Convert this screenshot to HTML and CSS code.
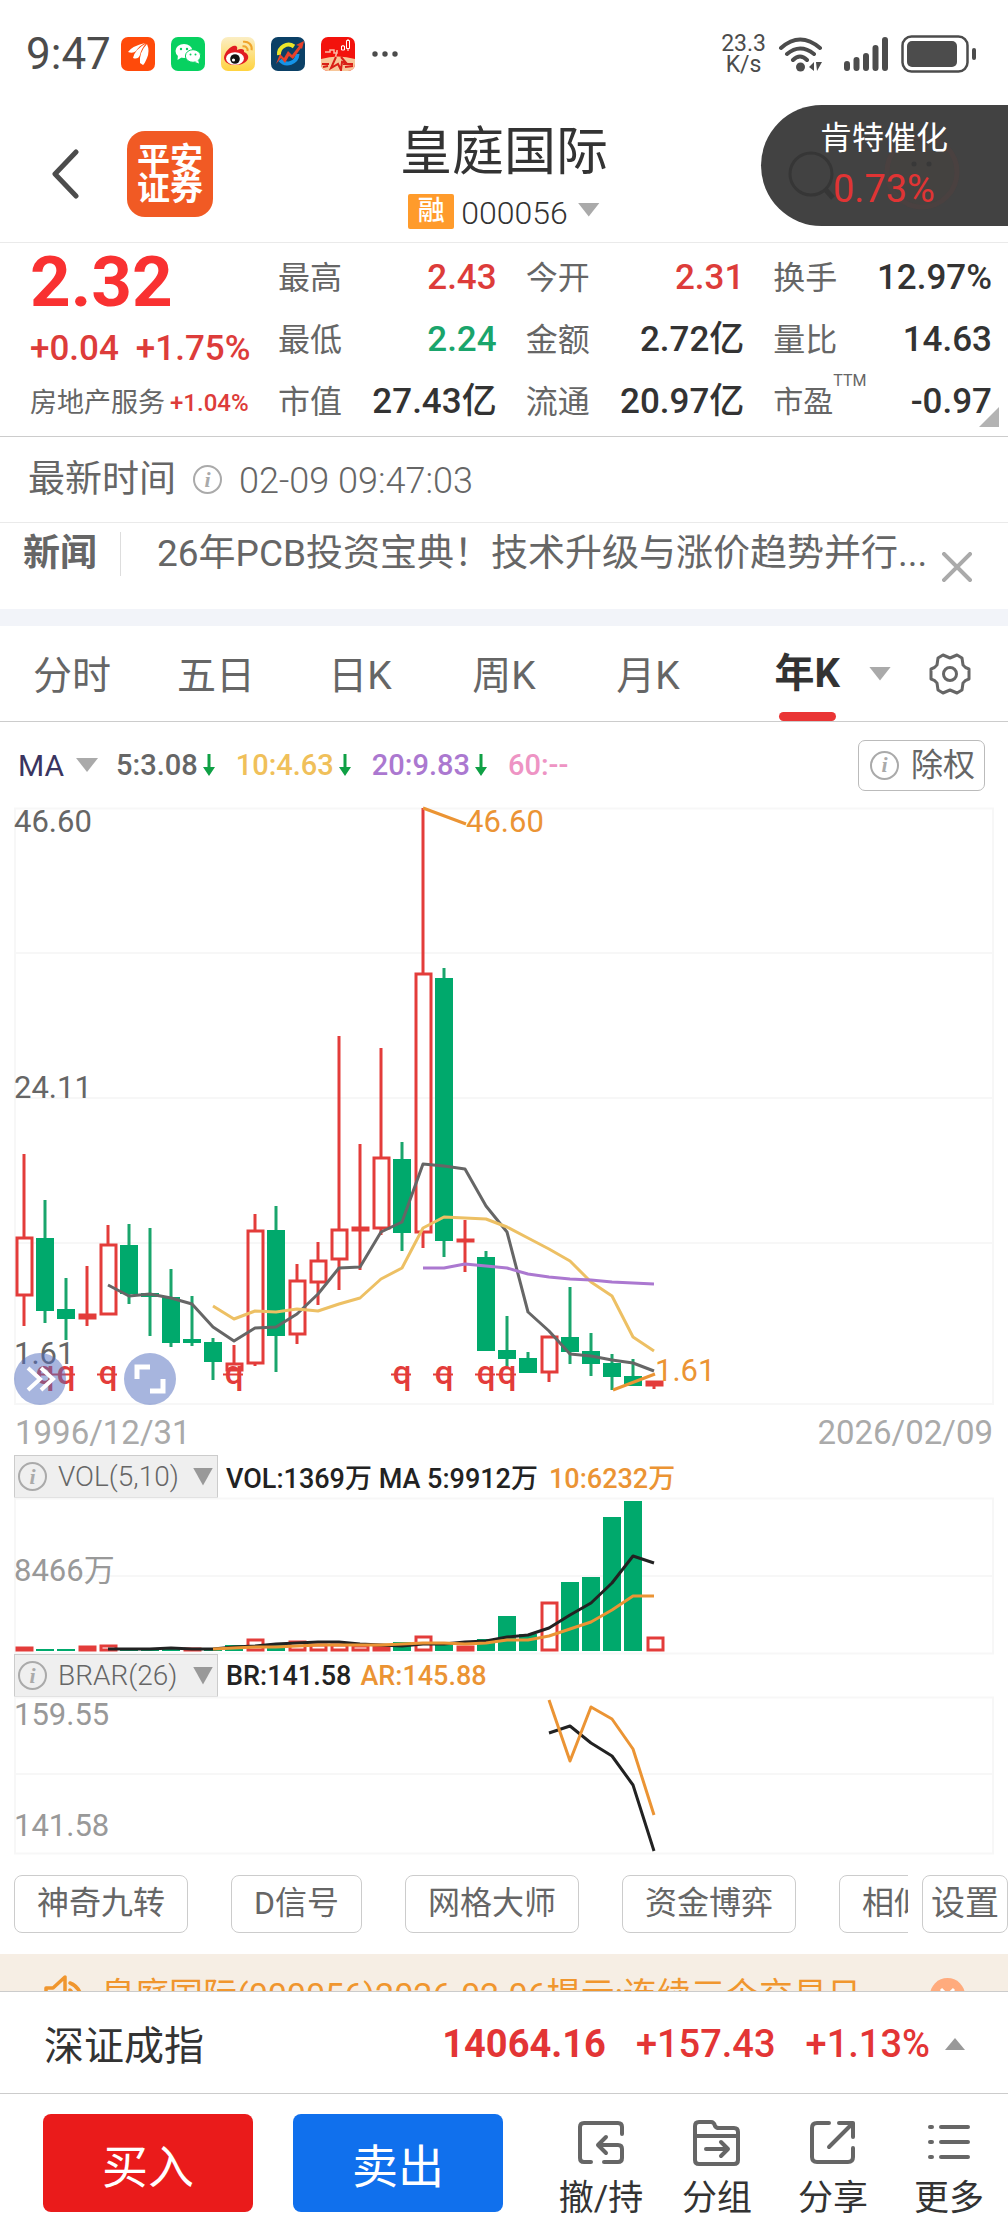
FILE: index.html
```html
<!DOCTYPE html>
<html lang="zh-CN">
<head>
<meta charset="utf-8">
<meta name="viewport" content="width=device-width, initial-scale=1">
<title>皇庭国际 000056</title>
<link rel="stylesheet" href="styles.css">
</head>
<body>
<div class="app">
  <div class="content">
    <div class="status">
      <span class="clock">9:47</span>
      <div class="apps">
        <svg viewBox="0 0 34 34"><rect width="34" height="34" rx="7" fill="#ff4a0a"/><path fill="#fff" d="M7 15Q11 9 24 6Q18 9 15 14Q12 17 7 15ZM12 21Q14 12 25 6.500Q20 12 19 18Q17 23 12 21ZM19 26Q18 15 26 7Q29 14 26 21Q23 28 22 28Z"/></svg>
        <svg viewBox="0 0 34 34"><rect width="34" height="34" rx="7" fill="#07d160"/><ellipse cx="13" cy="14" rx="8.500" ry="7" fill="#fff"/><path fill="#fff" d="M7 18l-.5 5 4-2.500z"/><circle cx="10" cy="12" r="1.200" fill="#07d160"/><circle cx="16" cy="12" r="1.200" fill="#07d160"/><ellipse cx="22" cy="19" rx="7.600" ry="6.300" fill="#fff" stroke="#07d160"/><path fill="#fff" d="M27 23l1 3.500-4-1.500z"/><circle cx="19.500" cy="17.500" r="1" fill="#07d160"/><circle cx="24.500" cy="17.500" r="1" fill="#07d160"/></svg>
        <svg viewBox="0 0 34 34"><defs><linearGradient id="wb" x2="0" y2="1"><stop stop-color="#fbeec4"/><stop offset="1" stop-color="#ffd33f"/></linearGradient></defs><rect width="34" height="34" rx="7" fill="url(#wb)"/><path fill="#e11b22" d="M3 21C3 15 11 7 15 9C17 10 16 12 16 13C20 11 24 12 23 15C28 17 28 21 26 23.500C21 30 4 30 3 21Z"/><ellipse cx="14" cy="21.500" rx="9" ry="6.300" fill="#fff"/><circle cx="14" cy="22" r="4.800" fill="#111"/><circle cx="12.500" cy="23" r="1.600" fill="#fff"/><path d="M21.500 9.500c3-.8 5.500 1.500 5 4.500M22 4.800c5.500-1 9.500 3.500 8.600 8.500" fill="none" stroke="#f0a52c" stroke-width="2"/></svg>
        <svg viewBox="0 0 34 34"><rect width="34" height="34" rx="7" fill="#0b4066"/><path d="M23 9.500A9.500 9.500 0 0 0 8 18" fill="none" stroke="#ece52a" stroke-width="4"/><path d="M9 23A10 10 0 0 0 26.500 17" fill="none" stroke="#1594e8" stroke-width="4"/><path fill="#e8412a" d="M5 27L9 17 13 21 17 14 21 18 28 9 25 8 33 4 31 12 30 11 22 22 18 19 14 26 10 21Z"/></svg>
        <svg viewBox="0 0 34 34"><defs><clipPath id="r"><rect width="34" height="34" rx="7"/></clipPath></defs><g clip-path="url(#r)"><rect width="34" height="34" fill="#f3120c"/><path fill="#f7c79a" d="M0 22Q17 17 34 22V34H0Z"/><path d="M4 15h5v-2h4v3h3v-3M16 14l-2 8M22 8v5M27 2v12" stroke="#fbb9a4" stroke-width="1.500" fill="none"/><path d="M25.500 3.500h3v8h-3zM20.500 9h3v4h-3z" fill="#f3120c" stroke="#fff" stroke-width="1"/><path d="M1 27h7M2 30l5-1M22 27h10M24 30l8-1M15 20l-5 11 7-4 3 6 1-8 5 2-6-7" stroke="#d91f16" stroke-width="2" fill="none"/></g></svg>
      </div>
      <svg class="dots" viewBox="0 0 26 6"><g fill="#4c4c4c"><circle cx="3" cy="3" r="2.700"/><circle cx="13" cy="3" r="2.700"/><circle cx="23" cy="3" r="2.700"/></g></svg>
      <div class="speed">23.3<br>K/s</div>
      <svg class="wifi" viewBox="0 0 46 36"><g fill="none" stroke="#4c4c4c" stroke-width="4" stroke-linecap="round"><path d="M3 12Q22 -5 42 12M9 18Q22 7 36 18M15 24Q22 17 29 24"/></g><circle cx="22.500" cy="31" r="4.500" fill="#4c4c4c"/><path fill="#4c4c4c" d="M31 31l5-5v9zM38 26h6l-5 9z"/></svg>
      <svg class="signal" viewBox="0 0 44 36"><path d="M3 28V32M12.500 24V32M22 20V32M31.500 12V32M41 4V32" stroke="#4c4c4c" stroke-width="6" stroke-linecap="round"/></svg>
      <svg class="battery" viewBox="0 0 76 38"><rect x="1.500" y="1.500" width="65" height="35" rx="9" fill="none" stroke="#4c4c4c" stroke-width="2.500"/><rect x="6" y="6" width="50" height="26" rx="5" fill="#4c4c4c"/><rect x="71" y="13" width="4" height="12" rx="2" fill="#4c4c4c"/></svg>
    </div>

    <header class="stock-header">
      <div class="nav">
        <button class="back" aria-label="返回"><svg viewBox="0 0 28 50"><path d="M25 3L4 25 25 47" fill="none" stroke="#4c4c4c" stroke-width="5" stroke-linecap="round" stroke-linejoin="round"/></svg></button>
        <div class="logo">平安<br>证券</div>
      </div>
      <div class="names">
        <h1>皇庭国际</h1>
        <div class="code"><span class="badge">融</span><span>000056</span><span class="tri"></span></div>
      </div>
      <div class="float">
        <svg class="ghost" viewBox="0 0 247 121"><g fill="none" stroke="#363636" stroke-width="3"><circle cx="50" cy="69" r="21"/><path d="M64 84l8 9" stroke-width="5"/></g><circle cx="161" cy="67" r="35" fill="#444240" stroke="#4a4140" stroke-width="5"/><circle cx="153" cy="59" r="2.500" fill="#383838"/><circle cx="168" cy="59" r="2.500" fill="#383838"/></svg>
        <span class="float-name">肯特催化</span>
        <span class="float-value">0.73%</span>
      </div>
    </header>

    <section class="quote">
      <div class="price">
        <div class="last">2.32</div>
        <div class="change"><span>+0.04</span><span>+1.75%</span></div>
        <div class="sector"><span>房地产服务</span><span class="sector-pct">+1.04%</span></div>
      </div>
      <dl class="stats">
        <div><dt>最高</dt><dd class="up">2.43</dd></div>
        <div><dt>最低</dt><dd class="down">2.24</dd></div>
        <div><dt>市值</dt><dd>27.43亿</dd></div>
      </dl>
      <dl class="stats">
        <div><dt>今开</dt><dd class="up">2.31</dd></div>
        <div><dt>金额</dt><dd>2.72亿</dd></div>
        <div><dt>流通</dt><dd>20.97亿</dd></div>
      </dl>
      <dl class="stats">
        <div><dt>换手</dt><dd>12.97%</dd></div>
        <div><dt>量比</dt><dd>14.63</dd></div>
        <div><dt class="with-sup">市盈<sup>TTM</sup></dt><dd>-0.97</dd></div>
      </dl>
      <span class="corner"></span>
    </section>

    <div class="time-row"><span>最新时间</span><span class="info">i</span><time>02-09 09:47:03</time></div>

    <div class="news">
      <strong>新闻</strong>
      <a href="#">26年PCB投资宝典！技术升级与涨价趋势并行...</a>
      <button class="close" aria-label="关闭"><svg viewBox="0 0 30 30"><path d="M2 2L28 28M28 2L2 28" stroke="#aaa" stroke-width="4" stroke-linecap="square"/></svg></button>
    </div>

    <nav class="tabs">
      <button>分时</button><button>五日</button><button>日K</button><button>周K</button><button>月K</button>
      <button class="active"><span>年K</span></button>
      <div class="tab-tools">
        <span class="tri"></span>
        <button class="gear" aria-label="图表设置"><svg viewBox="0 0 42 42"><g fill="none" stroke="#666" stroke-width="3" stroke-linejoin="round"><path d="M14 2L21 5 28 2 33 5 34 12Q36 15 40 16V26Q36 27 34 30L33 37 28 40 21 37 14 40 9 37 8 30Q6 27 2 26V16Q6 15 8 12L9 5Z"/><circle cx="21" cy="21" r="6.500"/></g></svg></button>
      </div>
    </nav>

    <div class="ma-row">
      <button class="ma-menu">MA<span class="tri"></span></button>
      <span class="ma5">5:3.08<svg class="arrow" viewBox="0 0 14 24"><path d="M5.500 1h3v13H13L7 23 1 14h4.500z"/></svg></span>
      <span class="ma10">10:4.63<svg class="arrow" viewBox="0 0 14 24"><path d="M5.500 1h3v13H13L7 23 1 14h4.500z"/></svg></span>
      <span class="ma20">20:9.83<svg class="arrow" viewBox="0 0 14 24"><path d="M5.500 1h3v13H13L7 23 1 14h4.500z"/></svg></span>
      <span class="ma60">60:--</span>
      <button class="rights"><span class="info">i</span>除权</button>
    </div>

    <div class="kline">
      <svg class="chart" viewBox="0 808 1008 597" role="img" aria-label="年K线图">
        <path class="grid" d="M15 808.500H993V1404H15ZM15 953H993M15 1098H993M15 1243H993"/>
        <g class="axis"><text x="14" y="832">46.60</text><text x="14" y="1098">24.11</text><text x="14" y="1364">1.61</text></g>
        <path class="green-wick" d="M45 1200V1323M66 1278V1340M129 1224V1304M150 1228V1336M171 1269V1347M192 1296V1346M213 1338V1380M276 1206V1372M402 1142V1251M444 968V1257M486 1251V1300M507 1316V1368M528 1352V1373M570 1287V1364M591 1333V1376M612 1354V1390M633 1359V1386"/>
        <path class="green-body" d="M36 1238h18v73h-18zM57 1309h18v10h-18zM120 1245h18v49h-18zM141 1293h18v4h-18zM162 1297h18v46h-18zM183 1339h18v4h-18zM204 1342h18v20h-18zM267 1230h18v106h-18zM393 1159h18v74h-18zM435 978h18v263h-18zM477 1257h18v94h-18zM498 1350h18v9h-18zM519 1358h18v15h-18zM561 1337h18v15h-18zM582 1351h18v13h-18zM603 1363h18v14h-18zM624 1376h18v10h-18z"/>
        <path class="red" d="M24 1154V1238M24 1295V1326M87 1266V1314M87 1319V1326M108 1225V1245M234 1345V1364M255 1214V1231M255 1363V1366M297 1264V1281M297 1334V1344M318 1242V1261M318 1282V1305M339 1036V1230M339 1259V1290M360 1144V1227M360 1231V1270M381 1048V1158M381 1228V1235M423 808V974M423 1232V1248M465 1220V1272M654 1386V1389M549 1372V1382"/>
        <path class="red" d="M17 1238h15v57h-15zM80 1315h15v3h-15zM101 1245h15v69h-15zM227 1364h15v6h-15zM248 1231h15v132h-15zM290 1281h15v53h-15zM311 1261h15v21h-15zM332 1230h15v29h-15zM353 1228h15v2h-15zM374 1158h15v70h-15zM416 974h15v258h-15zM458 1240h15v1h-15zM542 1337h15v35h-15zM647 1382h15v3h-15z"/>
        <path class="line ma5-line" d="M108 1285L129 1296 150 1294 171 1298 192 1304 213 1327 234 1341 255 1328 276 1327 297 1314 318 1294 339 1268 360 1267 381 1232 402 1222 423 1164 444 1166 465 1169 486 1206 507 1232 528 1312 549 1331 570 1354 591 1356 612 1360 633 1363 654 1371"/>
        <path class="line ma10-line" d="M213 1306L234 1319 255 1311 276 1312 297 1309 318 1311 339 1304 360 1298 381 1279 402 1268 423 1228 444 1217 465 1218 486 1219 507 1227 528 1238 549 1249 570 1261 591 1282 612 1296 633 1337 654 1351"/>
        <path class="line ma20-line" d="M423 1268L444 1268 465 1264 486 1266 507 1268 528 1274 549 1277 570 1279 591 1280 612 1282 633 1283 654 1284"/>
        <path class="line mark-line" d="M423 808L466 824M613 1390L655 1374"/>
        <g class="mark"><text x="466" y="832">46.60</text><text x="655" y="1381">1.61</text></g>
        <g class="q"><text x="45" y="1384">q</text><text x="66" y="1384">q</text><text x="108" y="1384">q</text><text x="234" y="1384">q</text><text x="402" y="1384">q</text><text x="444" y="1384">q</text><text x="486" y="1384">q</text><text x="507" y="1384">q</text></g>
        <path class="red strike" d="M35 1374.500h20M55 1374.500h20M97 1374.500h20M223 1374.500h20M391 1374.500h20M433 1374.500h20M475 1374.500h20M496 1374.500h20"/>
      </svg>
      <div class="chart-buttons">
        <button aria-label="前进"><svg viewBox="0 0 52 52"><path d="M14 15L26 26 14 37M27 15L39 26 27 37" fill="none" stroke="#fff" stroke-width="4"/></svg></button>
        <button aria-label="全屏"><svg viewBox="0 0 52 52"><path d="M13 26V14H26M39 26V38H26" fill="none" stroke="#fff" stroke-width="5"/></svg></button>
      </div>
    </div>
    <div class="dates"><time>1996/12/31</time><time>2026/02/09</time></div>

    <div class="indicator">
      <button><span class="info">i</span>VOL(5,10)<span class="tri dark"></span></button>
      <span>VOL:1369万 MA 5:9912万</span><span class="orange">10:6232万</span>
    </div>
    <svg class="chart" viewBox="0 1498 1008 156" role="img" aria-label="成交量">
      <path class="grid" d="M15 1498.500H993V1653.500H15ZM15 1576H993"/>
      <g class="axis light"><text x="14" y="1581">8466万</text></g>
      <path class="green-body" d="M36 1649h18v2h-18zM57 1649h18v2h-18zM120 1649h18v2h-18zM141 1648h18v3h-18zM162 1648h18v3h-18zM204 1649h18v2h-18zM225 1645h18v6h-18zM267 1645h18v6h-18zM393 1642h18v9h-18zM435 1644h18v7h-18zM477 1639h18v12h-18zM498 1616h18v35h-18zM519 1634h18v17h-18zM561 1582h18v69h-18zM582 1577h18v74h-18zM603 1517h18v134h-18zM624 1501h18v150h-18z"/>
      <path class="red" d="M17 1648h15v2h-15zM80 1647h15v3h-15zM101 1646h15v4h-15zM185 1649h15v1h-15zM248 1640h15v10h-15zM290 1642h15v8h-15zM311 1645h15v5h-15zM332 1645h15v5h-15zM353 1646h15v4h-15zM374 1647h15v3h-15zM416 1637h15v13h-15zM458 1647h15v3h-15zM542 1603h15v47h-15zM648 1638h15v12h-15z"/>
      <path class="line black-line" d="M108 1649L150 1649 171 1648 192 1649 213 1649 234 1647 255 1646 276 1644 297 1643 318 1642 339 1642 360 1644 381 1645 402 1646 423 1644 444 1644 465 1642 486 1641 507 1637 528 1635 549 1628 570 1615 591 1603 612 1583 633 1556 654 1563"/>
      <path class="line mark-line" d="M213 1649L234 1648 255 1647 276 1647 297 1646 318 1645 381 1645 402 1644 423 1643 444 1643 465 1644 486 1643 507 1640 528 1640 549 1636 570 1629 591 1622 612 1610 633 1596 654 1596"/>
    </svg>

    <div class="indicator">
      <button><span class="info">i</span>BRAR(26)<span class="tri dark"></span></button>
      <span>BR:141.58</span><span class="orange near">AR:145.88</span>
    </div>
    <svg class="chart" viewBox="0 1697 1008 157" role="img" aria-label="BRAR">
      <path class="grid" d="M15 1697.500H993V1853.500H15ZM15 1774H993"/>
      <g class="axis light"><text x="14" y="1725">159.55</text><text x="14" y="1836">141.58</text></g>
      <path class="line black-line" d="M549 1733L570 1726 591 1743 612 1756 633 1785 654 1851"/>
      <path class="line mark-line" d="M549 1700L570 1761 591 1707 612 1719 633 1749 654 1815"/>
    </svg>

    <div class="chips">
      <div class="chip-list"><button>神奇九转</button><button>D信号</button><button>网格大师</button><button>资金博弈</button><button>相似K线</button></div>
      <button class="chip-settings">设置</button>
    </div>

    <div class="notice">
      <svg viewBox="0 0 42 42"><g fill="none" stroke="#f0962e" stroke-width="3.500" stroke-linejoin="round" stroke-linecap="round"><path d="M3 14H10L22 3V39L10 30H3ZM27 9Q35 12 38 21Q35 30 27 34M27 16Q32 21 27 27"/></g></svg>
      <span>皇庭国际(000056)2026-02-06提示:连续三个交易日</span>
      <button aria-label="关闭提示"><svg viewBox="0 0 35 35"><circle cx="17.500" cy="17.500" r="17.500" fill="#ffab7d"/><path d="M11 11L24 24M24 11L11 24" stroke="#fff" stroke-width="3"/></svg></button>
    </div>
  </div>

  <footer class="footer">
    <div class="index-bar">
      <span class="index-name">深证成指</span>
      <strong>14064.16</strong><span>+157.43</span><span>+1.13%</span><span class="tri-up"></span>
    </div>
    <div class="actions">
      <button class="trade buy">买入</button>
      <button class="trade sell">卖出</button>
      <div class="tools">
        <button><svg viewBox="0 0 48 48"><path d="M45 14V7Q45 3 41 3H7Q3 3 3 7V38Q3 42 7 42H14M27 42H41Q45 42 45 38V29Q45 25 41 25H22M29 17L21 25 29 33"/></svg>撤/持</button>
        <button><svg viewBox="0 0 48 48"><path d="M2 6Q2 2 6 2H18Q21 2 22 6Q23 8 26 8H41Q45 8 45 12V40Q45 44 41 44H6Q2 44 2 40ZM2 16H45M13 29H35M28 22L35 29 28 36"/></svg>分组</button>
        <button><svg viewBox="0 0 48 48"><path d="M20 3H8Q3 3 3 8V37Q3 42 8 42H39Q44 42 44 37V28M30 3H44V17M44 3L20 27"/></svg>分享</button>
        <button><svg viewBox="0 0 48 48"><path d="M5 7H7M16 7H43M5 22H7M16 22H43M5 37H7M16 37H43"/></svg>更多</button>
      </div>
    </div>
  </footer>
</div>
</body>
</html>
```
FILE: styles.css
```css
* { box-sizing: border-box; }

body {
  margin: 0;
  background: #fff;
  color: #666;
  font-family: Roboto, "Noto Sans CJK SC", sans-serif;
}

button {
  margin: 0;
  padding: 0;
  border: 0;
  background: none;
  color: inherit;
  font: inherit;
  white-space: nowrap;
}

svg { display: block; }

.app {
  display: flex;
  flex-direction: column;
  height: 100vh;
}

.content {
  flex: 1;
  min-height: 0;
  overflow: hidden;
}

/* small shared shapes */
.tri {
  display: inline-block;
  flex: none;
  width: 22px;
  height: 14px;
  background: #aaa;
  clip-path: polygon(0 0, 100% 0, 50% 100%);
}
.tri.dark { width: 20px; height: 18px; background: #999; }
.tri-up {
  width: 20px;
  height: 12px;
  margin-left: -15px;
  background: #999;
  clip-path: polygon(50% 0, 100% 100%, 0 100%);
}
.info {
  display: inline-flex;
  flex: none;
  align-items: center;
  justify-content: center;
  width: 29px;
  height: 29px;
  border: 2px solid #aaa;
  border-radius: 50%;
  color: #aaa;
  font: italic bold 22px/1 "Liberation Serif", serif;
}

/* status bar */
.status {
  display: flex;
  align-items: center;
  height: 101px;
  padding: 6px 31px 0 26px;
  color: #4c4c4c;
}
.clock { width: 95px; font-size: 44px; line-height: 48px; }
.apps { display: flex; gap: 16px; }
.apps svg { width: 34px; height: 34px; }
.dots { width: 26px; height: 6px; margin-left: 17px; }
.speed {
  margin-left: auto;
  font-size: 23px;
  line-height: 21px;
  text-align: center;
}
.wifi { width: 46px; height: 36px; margin-left: 12px; }
.signal { width: 44px; height: 36px; margin-left: 20px; }
.battery { width: 76px; height: 38px; margin-left: 13px; }

/* header */
.stock-header {
  display: grid;
  grid-template-columns: 1fr auto 1fr;
  height: 142px;
  border-bottom: 1px solid #eaeaea;
}
.nav {
  display: flex;
  align-items: center;
  gap: 48px;
  padding: 5px 0 0 51px;
}
.back svg { width: 28px; height: 50px; }
.logo {
  width: 86px;
  height: 86px;
  padding-top: 14px;
  border-radius: 18px;
  background: #f15a24;
  color: #fff;
  font-size: 33px;
  font-weight: 700;
  line-height: 29px;
  text-align: center;
}
.names { display: flex; flex-direction: column; align-items: center; padding-top: 24px; }
.names h1 {
  margin: 0 0 13px;
  color: #333;
  font-size: 52px;
  font-weight: 400;
  line-height: 56px;
}
.code {
  display: flex;
  align-items: center;
  height: 35px;
  color: #333;
  font-size: 32px;
  font-weight: 300;
}
.code span:nth-child(2) { padding-top: 3px; }
.badge {
  width: 46px;
  height: 35px;
  margin-right: 7px;
  border-radius: 2px;
  background: #ff9b2b;
  color: #fff;
  font-size: 27px;
  font-weight: 500;
  line-height: 34px;
  text-align: center;
}
.code .tri { margin: 0 0 4px 10px; }
.float {
  position: relative;
  justify-self: end;
  display: flex;
  flex-direction: column;
  width: 247px;
  height: 121px;
  margin-top: 4px;
  padding: 9px 0 0 59px;
  border-radius: 61px 0 0 61px;
  background: #424242;
}
.ghost { position: absolute; inset: 0; width: 247px; height: 121px; }
.float-name { position: relative; color: #fff; font-size: 32px; line-height: 48px; }
.float-value {
  position: relative;
  padding-left: 13px;
  color: #e03434;
  font-size: 38px;
  line-height: 54px;
}

/* quote */
.quote {
  position: relative;
  display: grid;
  grid-template-columns: 219px 1fr 1fr 1fr;
  gap: 29px;
  height: 194px;
  padding: 0 16px 0 30px;
  border-bottom: 1px solid #ccc;
}
.price { white-space: nowrap; }
.last { color: #f93131; font-size: 71px; font-weight: 700; line-height: 78px; }
.change {
  display: flex;
  gap: 17px;
  color: #dd3c3a;
  font-size: 35px;
  font-weight: 500;
  line-height: 56px;
}
.sector { display: flex; align-items: center; gap: 5px; font-size: 27px; line-height: 52px; }
.sector-pct { color: #dd3c3a; font-size: 24px; font-weight: 500; }
.stats { margin: 4px 0 0; }
.stats div {
  display: flex;
  justify-content: space-between;
  height: 62px;
  line-height: 62px;
}
.stats dt { display: flex; font-size: 32px; }
.stats .with-sup { font-size: 30px; }
.stats dd { margin: 0; color: #333; font-size: 35px; font-weight: 500; }
.stats .up { color: #dd3c3a; }
.stats .down { color: #1aa56c; }
.stats sup { font-size: 16px; line-height: 20px; }
.corner {
  position: absolute;
  right: 9px;
  bottom: 9px;
  width: 20px;
  height: 20px;
  background: #b3b3b3;
  clip-path: polygon(100% 0, 100% 100%, 0 100%);
}

.time-row {
  display: flex;
  align-items: center;
  height: 86px;
  padding-left: 28px;
  border-bottom: 1px solid #eaeaea;
  font-size: 37px;
  line-height: 44px;
}
.time-row .info { margin: 0 17px 0 17px; }
.time-row time { padding-top: 3px; font-size: 36px; font-weight: 300; }

.news {
  display: flex;
  align-items: flex-start;
  height: 86px;
  padding: 9px 36px 0 23px;
  font-size: 37px;
  line-height: 44px;
}
.news strong { width: 98px; border-right: 1px solid #ddd; font-weight: 700; }
.news a {
  flex: 1;
  padding-left: 36px;
  overflow: hidden;
  color: inherit;
  text-decoration: none;
  white-space: nowrap;
}
.close { margin-top: 20px; }
.close svg { width: 30px; height: 30px; }

/* period tabs */
.tabs {
  display: grid;
  grid-template-columns: repeat(5, 1fr) 140px 148px;
  height: 113px;
  border-top: 17px solid #f2f4f9;
  border-bottom: 1px solid #ccc;
  font-size: 39px;
}
.tabs > button { padding-bottom: 4px; }
.tabs > .active {
  padding: 0 20px 0 0;
  color: #333;
  font-size: 40px;
  font-weight: 700;
  text-align: right;
}
.tabs .active span {
  display: inline-block;
  position: relative;
  line-height: 95px;
}
.tabs .active span::after {
  content: "";
  position: absolute;
  right: 4px;
  bottom: 0;
  left: 4px;
  height: 9px;
  border-radius: 5px;
  background: #ea3535;
}
.tab-tools { display: flex; align-items: center; gap: 38px; padding-left: 9px; }
.gear svg { width: 42px; height: 42px; }

.ma-row {
  display: flex;
  align-items: center;
  height: 86px;
  padding: 0 23px 0 18px;
  font-size: 29px;
  font-weight: 500;
}
.ma-menu { display: flex; align-items: center; gap: 12px; margin-right: 18px; color: #3a3560; font-size: 30px; font-weight: 400; }
.ma-row > span { display: flex; align-items: center; gap: 4px; margin-right: 20px; }
.ma10 { color: #f0c05a; }
.ma20 { color: #ab78d0; }
.ma60 { color: #ee94c4; }
.arrow { width: 14px; height: 24px; fill: #0fa045; }
.rights {
  display: flex;
  align-items: center;
  gap: 12px;
  height: 51px;
  margin-left: auto;
  padding: 0 9px 0 11px;
  border: 1px solid #bbb;
  border-radius: 7px;
  font-size: 32px;
  font-weight: 400;
  line-height: 44px;
}

/* charts */
.kline { position: relative; }
.chart { width: 100%; height: auto; overflow: visible; }
.grid { fill: none; stroke: #f7f7f7; stroke-width: 2; }
.axis { fill: #666; font-size: 31px; font-weight: 400; }
.axis.light { fill: #999; }
.green-wick { fill: none; stroke: #1aa56c; stroke-width: 3; }
.green-body { fill: #00a96c; }
.red { fill: none; stroke: #e33c3a; stroke-width: 3; }
.red.strike { stroke-width: 2; }
.line { fill: none; stroke-width: 3; stroke-linejoin: round; }
.ma5-line { stroke: #666; }
.ma10-line { stroke: #edc064; }
.ma20-line { stroke: #ab78d0; }
.mark-line { stroke: #eb9434; }
.black-line { stroke: #222; }
.mark { fill: #eb9434; font-size: 31px; font-weight: 400; }
.q { fill: #e33c3a; font-size: 33px; font-weight: 500; text-anchor: middle; }
.chart-buttons { position: absolute; bottom: 0; left: 14px; display: flex; gap: 58px; }
.chart-buttons button { width: 52px; height: 52px; border-radius: 50%; background: rgba(80, 108, 190, 0.5); }
.dates {
  display: flex;
  justify-content: space-between;
  height: 50px;
  padding: 3px 15px 0;
  color: #aaa;
  font-size: 33px;
  line-height: 50px;
}

.indicator {
  display: flex;
  align-items: center;
  height: 43px;
  padding-left: 14px;
  color: #222;
  font-size: 27px;
  font-weight: 500;
}
.indicator button {
  display: flex;
  align-items: center;
  width: 204px;
  height: 43px;
  margin-right: 8px;
  padding: 0 4px 0 3px;
  border: 1px solid #ccc;
  background: #efefef;
  color: #666;
  font-size: 28px;
  font-weight: 300;
}
.indicator .info { margin-right: 11px; }
.indicator .tri { margin-left: auto; }
.orange { margin-left: 11px; color: #eb9434; }
.orange.near { margin-left: 9px; }

/* feature chips */
.chips {
  display: flex;
  gap: 14px;
  height: 100px;
  padding: 21px 0 0 14px;
  font-size: 32px;
  line-height: 48px;
}
.chip-list { display: flex; flex: 1; gap: 43px; overflow: hidden; }
.chips button { flex: none; height: 58px; padding: 0 22px 2px; border: 1px solid #ccc; border-radius: 8px; }
.chips .chip-settings { width: 86px; padding: 0 0 2px; font-size: 34px; }

.notice {
  display: flex;
  align-items: center;
  height: 82px;
  padding: 0 43px;
  background: #f6eee4;
  color: #f0962e;
  font-size: 34px;
  line-height: 48px;
}
.notice > svg { width: 42px; height: 42px; margin-right: 16px; }
.notice button { margin-left: auto; }
.notice button svg { width: 35px; height: 35px; }

/* pinned footer */
.footer { background: #fff; }
.index-bar {
  display: flex;
  align-items: center;
  gap: 30px;
  height: 103px;
  padding: 3px 43px 0 44px;
  border-top: 1px solid #ccc;
  border-bottom: 1px solid #ccc;
  color: #e33535;
  font-size: 38px;
  font-weight: 500;
}
.index-bar strong { font-weight: 700; }
.index-name { margin-right: auto; padding-bottom: 3px; color: #333; font-size: 40px; font-weight: 400; }
.actions {
  display: flex;
  gap: 40px;
  height: 138px;
  padding: 20px 1px 0 43px;
}
.trade {
  width: 210px;
  height: 98px;
  border-radius: 8px;
  color: #fff;
  font-size: 46px;
}
.buy { background: #ea1b1b; }
.sell { background: #1070ed; }
.tools { display: grid; flex: 1; grid-template-columns: repeat(4, 1fr); color: #333; font-size: 35px; line-height: 44px; }
.tools button { display: flex; flex-direction: column; align-items: center; padding-top: 6px; }
.tools svg {
  width: 48px;
  height: 48px;
  margin-bottom: 9px;
  fill: none;
  stroke: #666;
  stroke-width: 4;
  stroke-linecap: round;
  stroke-linejoin: round;
}
```
